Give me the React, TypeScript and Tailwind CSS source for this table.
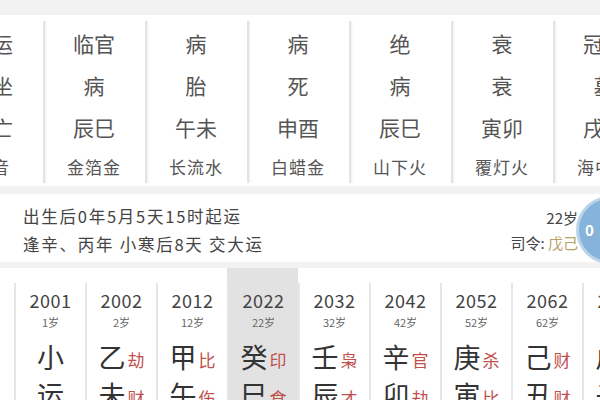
import React from "react";

const FONT = { fontFamily: '"Noto Sans CJK SC", "Noto Sans", "Liberation Sans", sans-serif' };

const TOP = [
  ["星运", "自坐", "空亡", "纳音"],
  ["临官", "病", "辰巳", "金箔金"],
  ["病", "胎", "午未", "长流水"],
  ["病", "死", "申酉", "白蜡金"],
  ["绝", "病", "辰巳", "山下火"],
  ["衰", "衰", "寅卯", "覆灯火"],
  ["冠带", "墓", "戌亥", "海中金"],
];

type Yun = { year: string; age: string; g: string; gt?: string; z: string; zt?: string; on?: boolean };

const YUN: Yun[] = [
  { year: "2001", age: "1岁", g: "小", z: "运" },
  { year: "2002", age: "2岁", g: "乙", gt: "劫", z: "未", zt: "财" },
  { year: "2012", age: "12岁", g: "甲", gt: "比", z: "午", zt: "伤" },
  { year: "2022", age: "22岁", g: "癸", gt: "印", z: "巳", zt: "食", on: true },
  { year: "2032", age: "32岁", g: "壬", gt: "枭", z: "辰", zt: "才" },
  { year: "2042", age: "42岁", g: "辛", gt: "官", z: "卯", zt: "劫" },
  { year: "2052", age: "52岁", g: "庚", gt: "杀", z: "寅", zt: "比" },
  { year: "2062", age: "62岁", g: "己", gt: "财", z: "丑", zt: "财" },
  { year: "2072", age: "72岁", g: "戊", gt: "财", z: "子", zt: "官" },
];

export default function App() {
  return (
    <div style={FONT} className="w-[600px] h-[400px] overflow-hidden bg-[#f2f2f2] text-[#444]">
      {/* 星运 table */}
      <div className="mt-[15px] h-[171px] bg-white flex ml-[-59px]">
        {TOP.map((c, i) => (
          <div key={i} className="w-[102px] shrink-0 relative pt-[7px] text-center">
            {i > 0 && <div className="absolute left-0 top-[6px] bottom-[3px] w-[2px] bg-[#e3e3e3] shadow-[1px_0_2px_#eeeeee]" />}
            {c.map((t, j) => (
              <div key={j} className={j < 3 ? "h-[42px] leading-[42px] text-[21px] text-[#555]" : "h-[38px] leading-[38px] text-[17px] tracking-[1px] text-[#555]"}>
                {t}
              </div>
            ))}
          </div>
        ))}
      </div>

      {/* 起运 info */}
      <div className="mt-[8px] h-[68px] bg-white flex items-center">
        <div className="flex-1 flex flex-col gap-[7px] pt-[4px] text-[16.5px] tracking-[1.75px] text-[#444]">
          <div className="flex leading-[21px]">
            <span className="-ml-[50px] w-[73px] shrink-0">起运：</span>
            <span>出生后0年5月5天15时起运</span>
          </div>
          <div className="flex leading-[21px]">
            <span className="-ml-[50px] w-[73px] shrink-0">交运：</span>
            <span>逢辛、丙年 小寒后8天 交大运</span>
          </div>
        </div>
        <div className="flex flex-col items-end gap-[7px] pt-[4px] text-[15px] text-[#444] mr-[22px]">
          <div className="leading-[18px]">22岁</div>
          <div className="leading-[18px]">
            司令: <span className="text-[#b9a266]">戊己</span>
          </div>
        </div>
      </div>

      {/* 大运 */}
      <div className="relative mt-[6px] h-[140px] bg-white flex pl-[14px]">
        <div className="absolute right-[-44px] top-[-72px] w-[68px] h-[68px] rounded-full bg-[#86b3d9] border-[3px] border-[#b9d4ea] flex items-center pl-[6px] text-white text-[15px] font-bold">
          0
        </div>
        {YUN.map((y, i) => (
          <div key={i} className={`w-[71px] shrink-0 flex flex-col ${y.on ? "bg-[#e2e2e2]" : ""}`}>
            <div className="mt-[15px] flex-1 border-l-[2px] border-[#e6e6e6] text-center pt-[5px]">
              <div className="h-[24px] leading-[24px] text-[18px] text-[#444] tracking-[0.5px]">{y.year}</div>
              <div className="h-[20px] leading-[20px] text-[11px] text-[#666]">{y.age}</div>
              <div className="mt-[6px] h-[38px] flex items-center justify-center gap-[2px]">
                <span className="text-[27px] text-[#333] leading-[38px]">{y.g}</span>
                {y.gt && <span className="text-[17px] text-[#c0504d] mt-[6px]">{y.gt}</span>}
              </div>
              <div className="h-[38px] flex items-center justify-center gap-[2px]">
                <span className="text-[27px] text-[#333] leading-[38px]">{y.z}</span>
                {y.zt && <span className="text-[17px] text-[#c0504d] mt-[6px]">{y.zt}</span>}
              </div>
            </div>
          </div>
        ))}
      </div>
    </div>
  );
}
